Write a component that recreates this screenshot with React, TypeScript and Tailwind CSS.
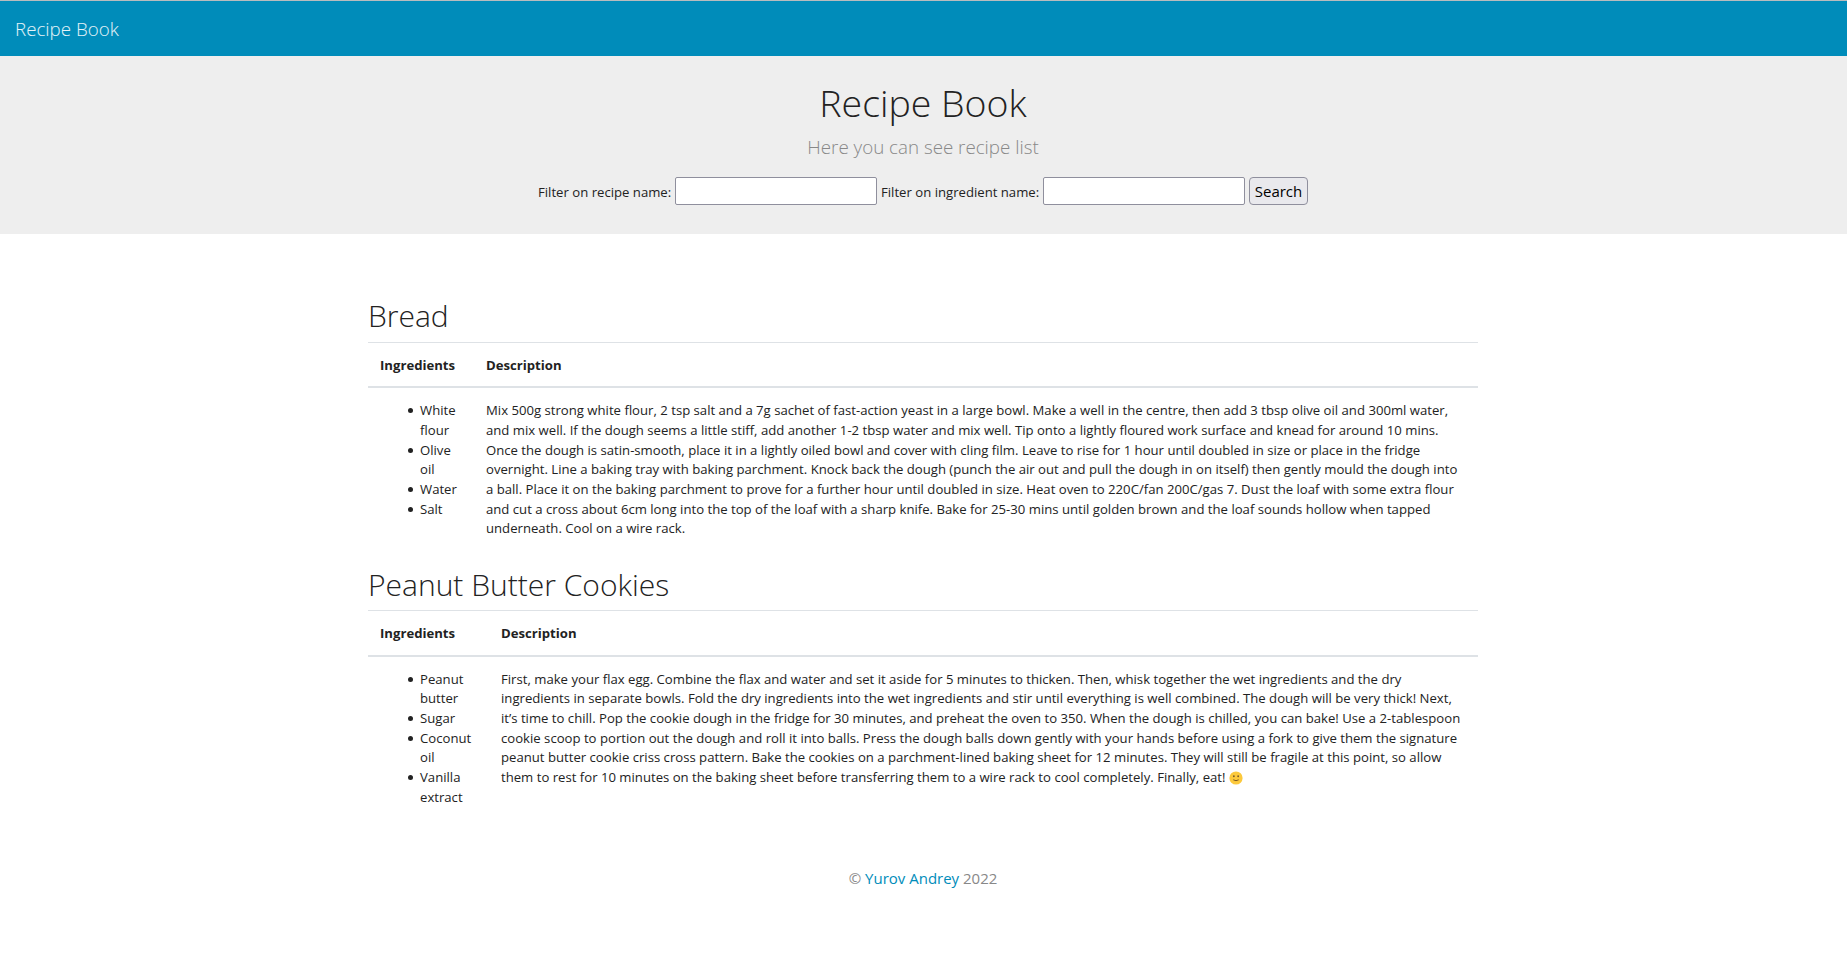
type Recipe = {
  name: string;
  ingredients: string[];
  description: string;
  headingClass: string;
  columnClass: string;
  cellClass: string;
};

const recipes: Recipe[] = [
  {
    name: "Bread",
    ingredients: ["White flour", "Olive oil", "Water", "Salt"],
    description:
      "Mix 500g strong white flour, 2 tsp salt and a 7g sachet of fast-action yeast in a large bowl. Make a well in the centre, then add 3 tbsp olive oil and 300ml water, and mix well. If the dough seems a little stiff, add another 1-2 tbsp water and mix well. Tip onto a lightly floured work surface and knead for around 10 mins. Once the dough is satin-smooth, place it in a lightly oiled bowl and cover with cling film. Leave to rise for 1 hour until doubled in size or place in the fridge overnight. Line a baking tray with baking parchment. Knock back the dough (punch the air out and pull the dough in on itself) then gently mould the dough into a ball. Place it on the baking parchment to prove for a further hour until doubled in size. Heat oven to 220C/fan 200C/gas 7. Dust the loaf with some extra flour and cut a cross about 6cm long into the top of the loaf with a sharp knife. Bake for 25-30 mins until golden brown and the loaf sounds hollow when tapped underneath. Cool on a wire rack.",
    headingClass: "mb-2",
    columnClass: "h-[45px] w-[106px]",
    cellClass: "h-[162px] px-3 pt-[13.2px]",
  },
  {
    name: "Peanut Butter Cookies",
    ingredients: ["Peanut butter", "Sugar", "Coconut oil", "Vanilla extract"],
    description:
      "First, make your flax egg. Combine the flax and water and set it aside for 5 minutes to thicken. Then, whisk together the wet ingredients and the dry ingredients in separate bowls. Fold the dry ingredients into the wet ingredients and stir until everything is well combined. The dough will be very thick! Next, it’s time to chill. Pop the cookie dough in the fridge for 30 minutes, and preheat the oven to 350. When the dough is chilled, you can bake! Use a 2-tablespoon cookie scoop to portion out the dough and roll it into balls. Press the dough balls down gently with your hands before using a fork to give them the signature peanut butter cookie criss cross pattern. Bake the cookies on a parchment-lined baking sheet for 12 minutes. They will still be fragile at this point, so allow them to rest for 10 minutes on the baking sheet before transferring them to a wire rack to cool completely. Finally, eat!",
    headingClass: "mb-[7px] pt-px",
    columnClass: "h-[46px] w-[121px]",
    cellClass: "h-[178px] px-3 pt-[12.6px]",
  },
];

function Smile() {
  return (
    <svg viewBox="0 0 14 14" className="inline-block h-[14px] w-[14px] align-[-3px]" aria-hidden="true">
      <circle cx="7" cy="7" r="6.6" fill="#fcc93c" />
      <ellipse cx="4.9" cy="5.2" rx="0.75" ry="1.05" fill="#5a4228" />
      <ellipse cx="9.1" cy="5.2" rx="0.75" ry="1.05" fill="#5a4228" />
      <path d="M4.6 9Q7 10.6 9.4 9" fill="none" stroke="#6d4c1e" strokeWidth="0.9" strokeLinecap="round" />
    </svg>
  );
}

function RecipeTable({ recipe, smile }: { recipe: Recipe; smile: boolean }) {
  return (
    <section>
      <h2 className={`text-[30px] leading-9 font-light ${recipe.headingClass}`}>{recipe.name}</h2>
      <table className="mb-4 w-full table-fixed border-separate border-spacing-0 border-t border-[#dee2e6] text-[13.158px] leading-[19.6875px]">
        <thead>
          <tr className="text-left align-top">
            <th className={`border-b-2 border-[#dee2e6] px-3 pt-[12.6px] font-bold ${recipe.columnClass}`}>Ingredients</th>
            <th className="border-b-2 border-[#dee2e6] px-3 pt-[12.6px] font-bold">Description</th>
          </tr>
        </thead>
        <tbody>
          <tr className="align-top">
            <td className={recipe.cellClass}>
              <ul className="pl-10">
                {recipe.ingredients.map((item) => (
                  <li
                    key={item}
                    className="relative before:absolute before:top-[7.3px] before:-left-3 before:size-[5px] before:rounded-full before:bg-[#222]"
                  >
                    {item}
                  </li>
                ))}
              </ul>
            </td>
            <td className={recipe.cellClass}>
              {recipe.description}
              {smile && <> <Smile /></>}
            </td>
          </tr>
        </tbody>
      </table>
    </section>
  );
}

export default function App() {
  return (
    <div className="min-h-screen bg-white font-['Open_Sans',sans-serif] text-[15px] leading-[22.5px] text-[#222]">
      <nav className="flex h-14 items-center border-t border-[#b9bcbe] bg-[#008cba] px-[15px]">
        <a href="#" className="text-[18.75px] leading-7 font-light text-white/90">Recipe Book</a>
      </nav>
      <header className="h-[178px] bg-[#eee] pt-6 pr-px text-center">
        <h1 className="mb-2 text-[37.5px] leading-[45px] font-light">Recipe Book</h1>
        <p className="mb-4 text-[18.75px] leading-[28px] font-light text-[#888]">Here you can see recipe list</p>
        <form className="flex items-center justify-center gap-1 text-[13.158px]" onSubmit={(e) => e.preventDefault()}>
          <label htmlFor="recipe" className="w-[133px] pt-0.5 whitespace-nowrap">Filter on recipe name:</label>
          <input id="recipe" className="h-7 w-[202px] rounded-[2px] border border-[#8f8f9d] bg-white px-0.5 text-[15px]" />
          <label htmlFor="ingredient" className="w-[158px] pt-0.5 whitespace-nowrap">Filter on ingredient name:</label>
          <input id="ingredient" className="h-7 w-[202px] rounded-[2px] border border-[#8f8f9d] bg-white px-0.5 text-[15px]" />
          <button className="h-7 w-[59px] rounded border border-[#8f8f9d] bg-[#e9e9ed] text-[15px] text-black">Search</button>
        </form>
      </header>
      <div className="pr-px">
        <main className="mx-auto w-[1140px] px-[15px] pt-16">
          {recipes.map((recipe, i) => (
            <RecipeTable key={recipe.name} recipe={recipe} smile={i === 1} />
          ))}
        </main>
        <footer className="pt-4 text-center text-[#888]">
          © <a href="#" className="text-[#008cba]">Yurov Andrey</a> 2022
        </footer>
      </div>
    </div>
  );
}
